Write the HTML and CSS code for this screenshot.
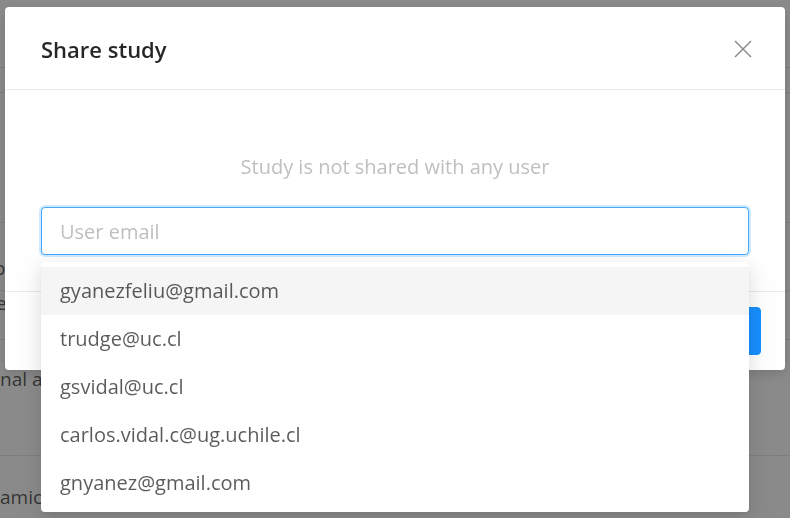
FILE: index.html
```html
<!DOCTYPE html>
<html lang="en">
<head>
<meta charset="utf-8">
<title>Share study</title>
<link rel="stylesheet" href="styles.css">
</head>
<body>
<div class="page">
  <div class="row r1"></div>
  <div class="row r2"></div>
  <div class="row r3"></div>
  <div class="row r4"><span class="bg-text t-o">o</span></div>
  <div class="row r5"><span class="bg-text t-e">e</span></div>
  <div class="row r6"><span class="bg-text">nal a</span></div>
  <div class="row r7"><span class="bg-text">amic</span></div>
</div>

<div class="overlay">
  <div class="modal" role="dialog" aria-label="Share study">
    <div class="modal-header">
      <h2 class="modal-title">Share study</h2>
      <button class="close-btn" aria-label="Close">
        <svg width="18" height="18" viewBox="0 0 18 18" fill="none" stroke="#8c8c8c" stroke-width="1.5">
          <path d="M1 1 L17 17 M17 1 L1 17"/>
        </svg>
      </button>
    </div>
    <div class="modal-body">
      <p class="empty">Study is not shared with any user</p>
      <div class="field">
        <input class="email-input" type="text" placeholder="User email">
        <ul class="dropdown">
          <li class="option active">gyanezfeliu@gmail.com</li>
          <li class="option">trudge@uc.cl</li>
          <li class="option">gsvidal@uc.cl</li>
          <li class="option">carlos.vidal.c@ug.uchile.cl</li>
          <li class="option">gnyanez@gmail.com</li>
        </ul>
      </div>
    </div>
    <div class="modal-footer">
      <button class="primary-btn">Share</button>
    </div>
  </div>
</div>
</body>
</html>
```

FILE: styles.css
```css
* { box-sizing: border-box; }

html, body {
  margin: 0;
  padding: 0;
  width: 790px;
  height: 518px;
  overflow: hidden;
  background: #ffffff;
  font-family: "Open Sans", "Noto Sans", "Liberation Sans", sans-serif;
}

/* background page (under overlay) */
.page {
  width: 790px;
}
.row {
  border-bottom: 1px solid #e8e8e8;
  display: flex;
  align-items: flex-start;
  overflow: hidden;
}
.r1 { height: 68px; }
.r2 { height: 25px; }
.r3 { height: 130px; }
.r4 { height: 68px; padding-top: 33px; }
.r5 { height: 49px; padding-top: 0; }
.r6 { height: 116px; padding-top: 27px; }
.r7 { height: 62px; padding-top: 29px; border-bottom: 0; }
.bg-text {
  font-size: 19px;
  line-height: 24px;
  color: rgba(0, 0, 0, 0.65);
  white-space: nowrap;
}
.t-o { margin-left: -6px; }
.t-e { margin-left: -4px; }

/* overlay + modal */
.overlay {
  position: fixed;
  inset: 0;
  background: rgba(0, 0, 0, 0.46);
  display: flex;
  justify-content: center;
  align-items: flex-start;
  padding-top: 7px;
}

.modal {
  width: 780px;
  background: #ffffff;
  border-radius: 4px;
  box-shadow: 0 4px 12px rgba(0, 0, 0, 0.15);
}

.modal-header {
  height: 83px;
  padding: 2px 33px 0 36px;
  border-bottom: 1px solid #ebebeb;
  display: flex;
  align-items: center;
  justify-content: space-between;
}

.modal-title {
  margin: 0;
  font-size: 22px;
  font-weight: 600;
  color: rgba(0, 0, 0, 0.85);
  line-height: 30px;
}

.close-btn {
  border: 0;
  background: transparent;
  padding: 0;
  width: 18px;
  height: 18px;
  display: flex;
  cursor: pointer;
}

.modal-body {
  padding: 63px 36px 36px;
}

.empty {
  margin: 0 0 26px;
  text-align: center;
  font-size: 20px;
  line-height: 28px;
  color: #bfbfbf;
}

.field {
  position: relative;
}

.email-input {
  display: block;
  width: 100%;
  height: 48px;
  padding: 0 18px;
  border: 1px solid #40a9ff;
  border-radius: 4px;
  box-shadow: 0 0 0 2px rgba(24, 144, 255, 0.2);
  font-family: inherit;
  font-size: 20px;
  color: rgba(0, 0, 0, 0.65);
  outline: none;
  background: #ffffff;
}
.email-input::placeholder { color: #bfbfbf; }

.dropdown {
  position: absolute;
  top: 55px;
  left: 0;
  right: 0;
  margin: 0;
  padding: 5px 0;
  list-style: none;
  background: #ffffff;
  border-radius: 4px;
  box-shadow: 0 3px 6px -4px rgba(0,0,0,0.12), 0 6px 16px 0 rgba(0,0,0,0.08), 0 9px 28px 8px rgba(0,0,0,0.05);
  z-index: 2;
}

.option {
  height: 48px;
  line-height: 48px;
  padding: 0 19px;
  font-size: 20px;
  color: rgba(0, 0, 0, 0.65);
  white-space: nowrap;
}
.option.active { background: #f5f5f5; }

.modal-footer {
  border-top: 1px solid #ebebeb;
  padding: 15px 24px;
  display: flex;
  justify-content: flex-end;
}

.primary-btn {
  height: 48px;
  padding: 0 24px;
  border: 1px solid #1890ff;
  border-radius: 4px;
  background: #1890ff;
  color: #ffffff;
  font-family: inherit;
  font-size: 20px;
}
```
